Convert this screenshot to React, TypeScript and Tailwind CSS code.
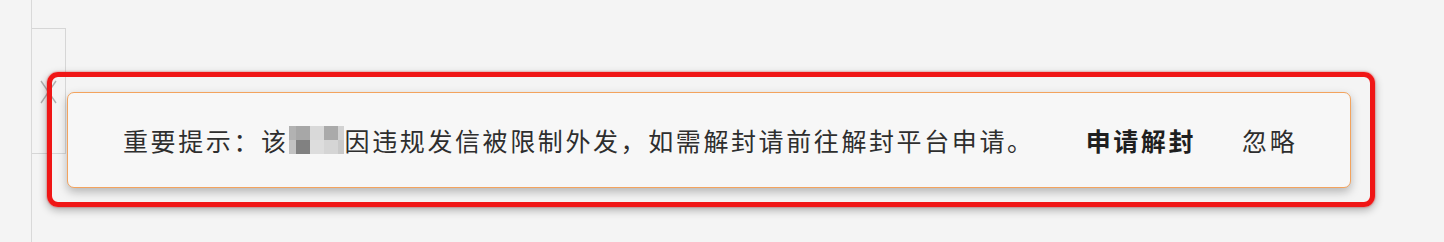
import React from 'react';

const mosaicTop = ['#b2b2b2', '#a7a7a7', '#d9d9d9', '#aaaaaa', '#d2d2d2'];
const mosaicBottom = ['#c2c2c2', '#818181', '#dddddd', '#d5d5d5', '#c9c9c9'];
const mosaicWidths = ['w-[7px]', 'w-[14px]', 'w-[14px]', 'w-[14px]', 'w-[6px]'];

function Mosaic() {
  return (
    <span className="inline-flex flex-col mr-[1px] align-middle">
      <span className="flex h-[14px]">
        {mosaicTop.map((c, i) => (
          <span key={i} className={`${mosaicWidths[i]} h-full`} style={{ backgroundColor: c }} />
        ))}
      </span>
      <span className="flex h-[14px]">
        {mosaicBottom.map((c, i) => (
          <span key={i} className={`${mosaicWidths[i]} h-full`} style={{ backgroundColor: c }} />
        ))}
      </span>
    </span>
  );
}

export default function App() {
  return (
    <div className="relative w-full h-[242px] bg-[#f4f4f4] overflow-hidden font-['Noto_Sans_CJK_SC','Noto_Sans',sans-serif]">
      {/* side panel behind the notice */}
      <div className="ml-[31px] h-full border-l border-[#d9d9d9] pt-[28px]">
        <div className="w-[34px] h-[126px] border-t border-r border-b border-[#d6d6d6] flex items-start pt-[51px] pl-[8px]">
          <svg width="18" height="24" viewBox="0 0 18 24" fill="none" stroke="#b0b0b0" strokeWidth="1.4">
            <path d="M1 1 L16 23" />
            <path d="M1 23 L16 1" />
          </svg>
        </div>
      </div>

      {/* highlighted notice */}
      <div className="absolute left-[47px] top-[72px] w-[1328px] h-[135px] border-[5px] border-[#f01616] rounded-[11px] shadow-[0_3px_8px_rgba(0,0,0,0.3),0_0_2px_rgba(240,22,22,0.7)] pt-[15px] pl-[15px]">
        <div className="w-[1284px] h-[96px] rounded-[7px] border border-[#f3a35e] bg-[#f7f7f7] shadow-[0_4px_10px_rgba(0,0,0,0.26)] flex items-center pl-[55px] text-[25px] tracking-[2.6px] text-[#2e2e2e] leading-none">
          <span className="flex items-center">
            重要提示：该<Mosaic />因违规发信被限制外发，如需解封请前往解封平台申请。
          </span>
          <span className="ml-[51px] font-bold text-[#1f1f1f]">申请解封</span>
          <span className="ml-[46px] text-[#2e2e2e]">忽略</span>
        </div>
      </div>
    </div>
  );
}
